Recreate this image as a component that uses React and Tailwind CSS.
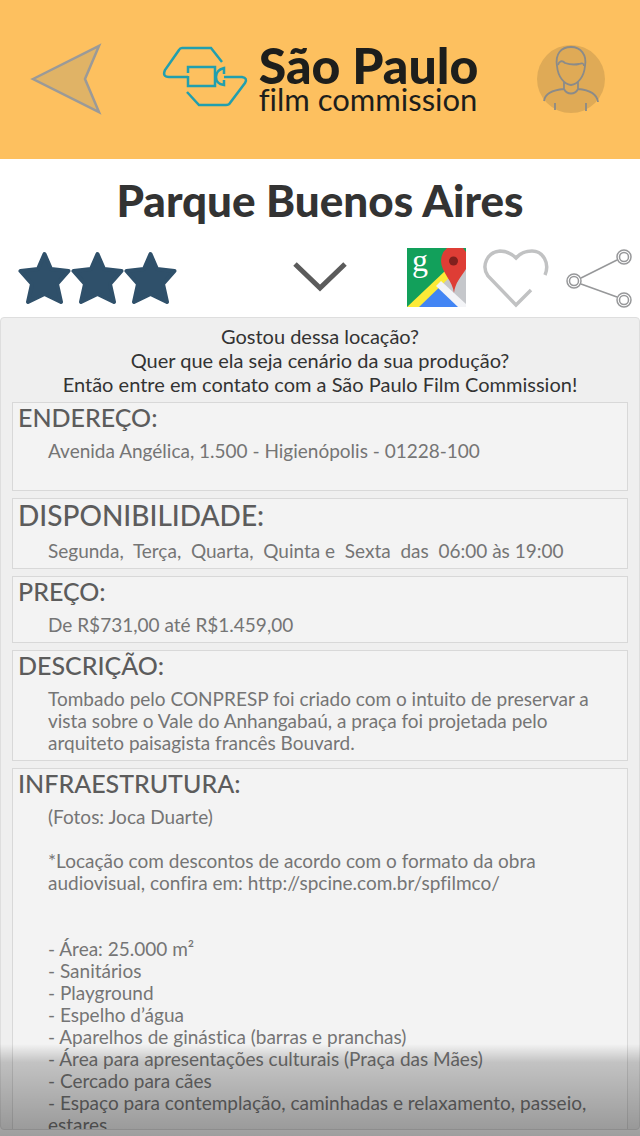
import React from 'react';

const sections = [
    {
        id: 'endereco',
        title: 'ENDEREÇO:',
        box: 'h-[89px]',
        text: 'Avenida Angélica, 1.500 - Higienópolis - 01228-100',
    },
    {
        id: 'disponibilidade',
        title: 'DISPONIBILIDADE:',
        box: 'h-[71px]',
        large: true,
        text: 'Segunda,  Terça,  Quarta,  Quinta e  Sexta  das  06:00 às 19:00',
    },
    {
        id: 'preco',
        title: 'PREÇO:',
        box: 'h-[67px]',
        text: 'De R$731,00 até R$1.459,00',
    },
    {
        id: 'descricao',
        title: 'DESCRIÇÃO:',
        box: 'h-[111px]',
        text: 'Tombado pelo CONPRESP foi criado com o intuito de preservar a\nvista sobre o Vale do Anhangabaú, a praça foi projetada pelo\narquiteto paisagista francês Bouvard.',
    },
    {
        id: 'infraestrutura',
        title: 'INFRAESTRUTURA:',
        box: '',
        text: '(Fotos: Joca Duarte)\n\n*Locação com descontos de acordo com o formato da obra\naudiovisual, confira em: http://spcine.com.br/spfilmco/\n\n\n- Área: 25.000 m²\n- Sanitários\n- Playground\n- Espelho d’água\n- Aparelhos de ginástica (barras e pranchas)\n- Área para apresentações culturais (Praça das Mães)\n- Cercado para cães\n- Espaço para contemplação, caminhadas e relaxamento, passeio,\nestares.',
    },
];

const BackIcon = () => (
    <svg width="72" height="72" viewBox="0 0 72 72" aria-hidden="true">
        <path d="M3 36 69 3 55 36 69 69Z" fill="#e0b366" stroke="#9b9a98" strokeWidth="2.5" />
    </svg>
);

const CameraLogo = () => (
    <svg width="86" height="62" viewBox="0 0 86 62" fill="none" stroke="#229fae" strokeWidth="2.5" aria-hidden="true">
        <path d="M60 17 49 3H20Q18 3 17 5L3 25Q0 32 7 32H26" />
        <path d="M26 28V22H53V41H26V31" />
        <path d="M62 29V23Q54 25 54 32T62 40V35M62 32H80Q86 33 83 38L68 58Q67 60 64 60H37L25 47" />
    </svg>
);

const UserIcon = () => (
    <svg width="70" height="70" viewBox="0 0 70 70" fill="none" stroke="#8b8b89" strokeWidth="1.8" aria-hidden="true">
        <circle cx="35" cy="35" r="34" fill="#dfaa56" stroke="none" />
        <path d="M21 22C19 10 25 3 35 3s16 8 14 19c-1 11-7 18-14 19-7-1-13-8-14-19Z" />
        <path d="M22 21c1-4 4-5 7-2 6 2 9 2 14 1 3-1 5-1 5 2" />
        <path d="M28 38v7c-12 1-19 5-20 12M42 38v7c12 1 19 5 20 13M28 45c3 6 11 6 14 0M19 59v7M50 59v8" />
    </svg>
);

const Star = () => (
    <svg width="53" height="54" viewBox="0 0 53 54" aria-hidden="true">
        <path
            d="M26.500 3 33 18 50.500 20 39 33 43 51 26.500 43 10 51 14 33 2.500 20 20 18Z"
            fill="#2f506a"
            stroke="#2f506a"
            strokeWidth="4"
            strokeLinejoin="round"
        />
    </svg>
);

const ChevronIcon = () => (
    <svg width="56" height="34" viewBox="0 0 56 34" fill="none" aria-hidden="true">
        <path d="M3 3 28 27 53 3" stroke="#5b5b5b" strokeWidth="5" />
    </svg>
);

const MapsIcon = () => (
    <svg width="59" height="59" viewBox="0 0 59 59" aria-hidden="true">
        <path fill="#12a05b" d="M0 0H59V59H0Z" />
        <path fill="#c5c7cb" d="M59 11V59L32 35Z" />
        <path fill="#4285f4" d="M8 59 31 35 55 59Z" />
        <path fill="#fcea37" d="M0 59 38 23 44 28 12 59Z" />
        <path fill="#f3f4f7" d="M34 33 59 56V59H51L29 38Z" />
        <path fill="#de3d35" d="M47 45C46 33 34 24 34 13Q34 5 40 0H56L59 4V21C54 29 48 35 47 45Z" />
        <circle cx="46.500" cy="13" r="4.500" fill="#80201d" />
        <text x="5" y="23" fill="#fff" fontFamily="Liberation Serif, serif" fontSize="32">g</text>
    </svg>
);

const HeartIcon = () => (
    <svg width="66" height="60" viewBox="0 0 66 60" fill="none" stroke="#c1c2c3" strokeWidth="3.500" aria-hidden="true">
        <path d="M62 27C67 15 60 3 49 3q-10 0-16 7Q26 3 17 3C4 4-2 18 5 28L33 57 48 42" />
    </svg>
);

const ShareIcon = () => (
    <svg width="66" height="60" viewBox="0 0 66 60" fill="none" stroke="#97989a" strokeWidth="1.500" aria-hidden="true">
        <path d="M15 30 51 12M15 36 51 49" />
        {[[8, 33], [58, 9], [58, 52]].map(([cx, cy]) => (
            <g key={`${cx}-${cy}`}>
                <circle cx={cx} cy={cy} r="7" />
                <circle cx={cx} cy={cy} r="4.500" />
            </g>
        ))}
    </svg>
);

const Header = () => (
    <header className="grid h-[159px] shrink-0 grid-cols-[1fr_auto_1fr] items-center bg-[#fdc05f] pb-[2px]">
        <div className="flex pl-[30px]">
            <button type="button" aria-label="Voltar">
                <BackIcon />
            </button>
        </div>
        <div className="flex items-start gap-[11px] text-[#1d1e1c]">
            <CameraLogo />
            <div className="whitespace-nowrap">
                <p className="text-[50px] leading-[40px] font-black">São Paulo</p>
                <p className="text-[31px] leading-[28px]">film commission</p>
            </div>
        </div>
        <div className="flex justify-end pr-[34px]">
            <button type="button" aria-label="Perfil">
                <UserIcon />
            </button>
        </div>
    </header>
);

const Actions = () => (
    <div className="grid h-[75px] shrink-0 grid-cols-[1fr_auto_1fr] items-center pb-[4px]">
        <div className="flex pl-[18px]" role="img" aria-label="3 estrelas">
            <Star />
            <Star />
            <Star />
        </div>
        <button type="button" aria-label="Recolher detalhes">
            <ChevronIcon />
        </button>
        <div className="flex justify-end gap-[17px] pr-[8px]">
            <button type="button" aria-label="Abrir no mapa">
                <MapsIcon />
            </button>
            <button type="button" aria-label="Favoritar">
                <HeartIcon />
            </button>
            <button type="button" aria-label="Compartilhar">
                <ShareIcon />
            </button>
        </div>
    </div>
);

const Section = ({ section }) => (
    <section className={`shrink-0 border border-[#d8d8d8] bg-[#f3f3f3] px-[5px] ${section.box}`}>
        <h2 className={`font-medium text-[#5c5c5c] ${section.large ? 'text-[28px] leading-[32px]' : 'text-[25px] leading-[28px]'}`}>
            {section.title}
        </h2>
        <p className="pt-[9px] pl-[30px] text-[19px] leading-[22px] whitespace-pre text-[#757575]">
            {section.text}
        </p>
    </section>
);

const App = () => {
    return (
        <div className="relative flex h-screen flex-col overflow-hidden bg-white pb-[6px] font-['Lato',sans-serif] [font-variant-ligatures:none]">
            <Header />
            <h1 className="h-[83px] shrink-0 text-center text-[44px] leading-[83px] font-black text-[#333333]">
                Parque Buenos Aires
            </h1>
            <Actions />
            <main className="flex min-h-0 flex-1 flex-col gap-[7px] overflow-hidden rounded-[4px] border border-[#dedede] bg-[#efefef] px-[11px] pt-[6px]">
                <p className="-mb-[1px] shrink-0 text-center text-[20px] leading-[24px] text-[#333333]">
                    Gostou dessa locação?
                    <br />
                    Quer que ela seja cenário da sua produção?
                    <br />
                    Então entre em contato com a São Paulo Film Commission!
                </p>
                {sections.map((section) => (
                    <Section key={section.id} section={section} />
                ))}
            </main>
            <div className="pointer-events-none absolute inset-x-0 bottom-0 h-[92px] bg-linear-to-b from-black/0 via-black/20 via-20% to-black/38" />
        </div>
    );
};

export default App;
